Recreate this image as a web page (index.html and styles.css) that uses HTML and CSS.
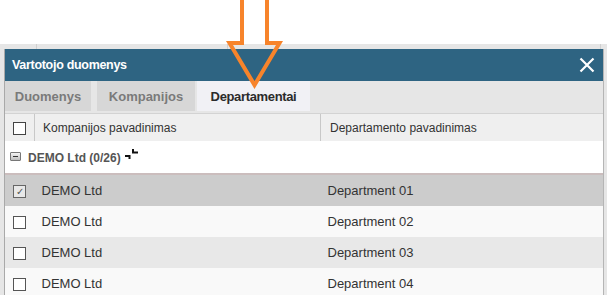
FILE: index.html
```html
<!DOCTYPE html>
<html lang="en">
<head>
    <meta charset="UTF-8">
    <title>Vartotojo duomenys</title>
    <link rel="stylesheet" href="styles.css">
</head>
<body>
    <!-- Page behind the dialog -->
    <div class="page-top"></div>
    <div class="backdrop">
        <div class="backdrop-lines">
            <span class="line line-1"></span>
            <span class="line line-2"></span>
            <span class="line line-3"></span>
        </div>

        <!-- Dialog -->
        <div class="dialog">
            <div class="dialog-header">
                <span class="dialog-title">Vartotojo duomenys</span>
                <svg class="close-icon" width="16" height="16" viewBox="0 0 16 16">
                    <path d="M1.5 1.5 L14.5 14.5 M14.5 1.5 L1.5 14.5" stroke="#fff" stroke-width="2.2" fill="none"/>
                </svg>
            </div>

            <div class="tabs">
                <div class="tab tab-data">Duomenys</div>
                <div class="tab tab-comp">Kompanijos</div>
                <div class="tab tab-dept active">Departamentai</div>
            </div>

            <table class="grid">
                <thead>
                    <tr>
                        <th class="col-check"><span class="checkbox"></span></th>
                        <th class="col-company">Kompanijos pavadinimas</th>
                        <th class="col-dept">Departamento pavadinimas</th>
                    </tr>
                </thead>
                <tbody>
                    <tr class="group-row">
                        <td colspan="3">
                            <div class="group-cell">
                                <span class="group-toggle"></span>
                                <span class="group-name">DEMO Ltd (0/26)</span>
                                <svg class="collapse-icon" width="13" height="10" viewBox="0 0 13 10">
                                    <path d="M0 7 H4.5 V10 M8 0 V3.5 H13" stroke="#111" stroke-width="2" fill="none"/>
                                </svg>
                            </div>
                        </td>
                    </tr>
                    <tr class="row selected">
                        <td class="col-check"><span class="checkbox checked">&#10003;</span></td>
                        <td>DEMO Ltd</td>
                        <td>Department 01</td>
                    </tr>
                    <tr class="row">
                        <td class="col-check"><span class="checkbox"></span></td>
                        <td>DEMO Ltd</td>
                        <td>Department 02</td>
                    </tr>
                    <tr class="row alt">
                        <td class="col-check"><span class="checkbox"></span></td>
                        <td>DEMO Ltd</td>
                        <td>Department 03</td>
                    </tr>
                    <tr class="row">
                        <td class="col-check"><span class="checkbox"></span></td>
                        <td>DEMO Ltd</td>
                        <td>Department 04</td>
                    </tr>
                </tbody>
            </table>
        </div>
    </div>

    <!-- Annotation arrow -->
    <svg class="pointer-arrow" width="607" height="295" viewBox="0 0 607 295">
        <path d="M242 -5 V43 H229.5 L254.5 85 L279.5 43 H267 V-5" stroke="#f7842b" stroke-width="4" fill="none" stroke-linejoin="miter"/>
    </svg>
</body>
</html>
```

FILE: styles.css
```css
body {
    margin: 0;
    font-family: "Liberation Sans", Arial, sans-serif;
    background-color: #fff;
    color: #333;
    width: 607px;
    height: 295px;
    overflow: hidden;
    position: relative;
}

.page-top {
    height: 44px;
    background-color: #fff;
}

.backdrop {
    position: relative;
    background-color: #e6e6e6;
    padding: 5px 3px 0 4px;
    height: 251px;
    box-sizing: border-box;
}

.backdrop-lines .line {
    position: absolute;
    top: 0;
    width: 1px;
    height: 5px;
    background-color: #d0d0d0;
}

.line-1 { left: 36px; }
.line-2 { left: 227px; }
.line-3 { left: 600px; }

.dialog {
    border-left: 1px solid #a9a9a9;
    border-right: 1px solid #b5b5b5;
    background-color: #fff;
    height: 100%;
    overflow: hidden;
}

.dialog-header {
    display: flex;
    justify-content: space-between;
    align-items: center;
    height: 32px;
    padding: 0 7px 0 7px;
    background-color: #2e6482;
}

.dialog-title {
    color: #fff;
    font-weight: bold;
    font-size: 12.5px;
    letter-spacing: -0.3px;
}

.close-icon {
    display: block;
    margin-right: 1px;
}

.tabs {
    display: flex;
    height: 32px;
    background-color: #e6e6e6;
    border-bottom: 1px solid #d3d3d3;
}

.tab {
    height: 30px;
    display: flex;
    align-items: center;
    justify-content: center;
    font-size: 13px;
    font-weight: bold;
    color: #7a7a7a;
    background-color: #d7d7d7;
}

.tab-data {
    width: 86px;
}

.tab-comp {
    width: 98px;
    margin-left: 6px;
}

.tab-dept {
    width: 113px;
    margin-left: 2px;
}

.tab.active {
    color: #2b2b2b;
    background-color: #f1f1f5;
    letter-spacing: -0.35px;
}

.grid {
    width: 100%;
    border-collapse: collapse;
    table-layout: fixed;
}

.grid th {
    height: 27px;
    padding: 0 0 0 8px;
    background-color: #efefef;
    font-size: 12px;
    font-weight: normal;
    text-align: left;
    color: #333;
    border-left: 1px solid #c8c8c8;
}

.grid th.col-check {
    width: 29px;
    padding: 0;
    border-left: none;
    text-align: center;
}

.grid th.col-company {
    width: 277px;
}

.grid th.col-dept {
    padding-left: 9px;
}

.grid td {
    height: 31px;
    padding: 0 0 0 7px;
    font-size: 13px;
    color: #333;
}

.grid td.col-check {
    padding: 0;
    text-align: center;
}

.checkbox {
    display: inline-block;
    width: 11px;
    height: 11px;
    border: 1px solid #555;
    background-color: #fff;
    vertical-align: middle;
    font-size: 10px;
    line-height: 11px;
    color: #555;
    text-align: center;
}

.grid th .checkbox {
    border-color: #444;
    width: 11px;
    height: 11px;
    border-width: 1.5px;
}

.checkbox.checked {
    background-color: #e8e8e8;
    border-color: #666;
}

.group-row td {
    height: 32px;
    padding: 0 0 0 5px;
    background-color: #fff;
    border-bottom: 2px solid #cbbdbd;
}

.group-cell {
    display: flex;
    align-items: center;
    gap: 7px;
    padding-top: 1px;
}

.group-toggle {
    position: relative;
    width: 9px;
    height: 7px;
    border: 1px solid #777;
    border-radius: 1px;
    background: linear-gradient(#f4f4f4, #bdbdbd);
    margin-top: -2px;
}

.group-toggle::after {
    content: "";
    position: absolute;
    left: 2px;
    right: 2px;
    top: 3px;
    height: 1px;
    background-color: #333;
}

.group-name {
    font-size: 12px;
    font-weight: bold;
    color: #555;
}

.collapse-icon {
    display: block;
    margin-left: -3px;
    margin-top: -8px;
}

.row td {
    background-color: #f9f9f9;
}

.row.alt td {
    background-color: #e8e8e8;
}

.row.selected td {
    background-color: #cccccc;
}

.pointer-arrow {
    position: absolute;
    top: 0;
    left: 0;
    pointer-events: none;
}
```
